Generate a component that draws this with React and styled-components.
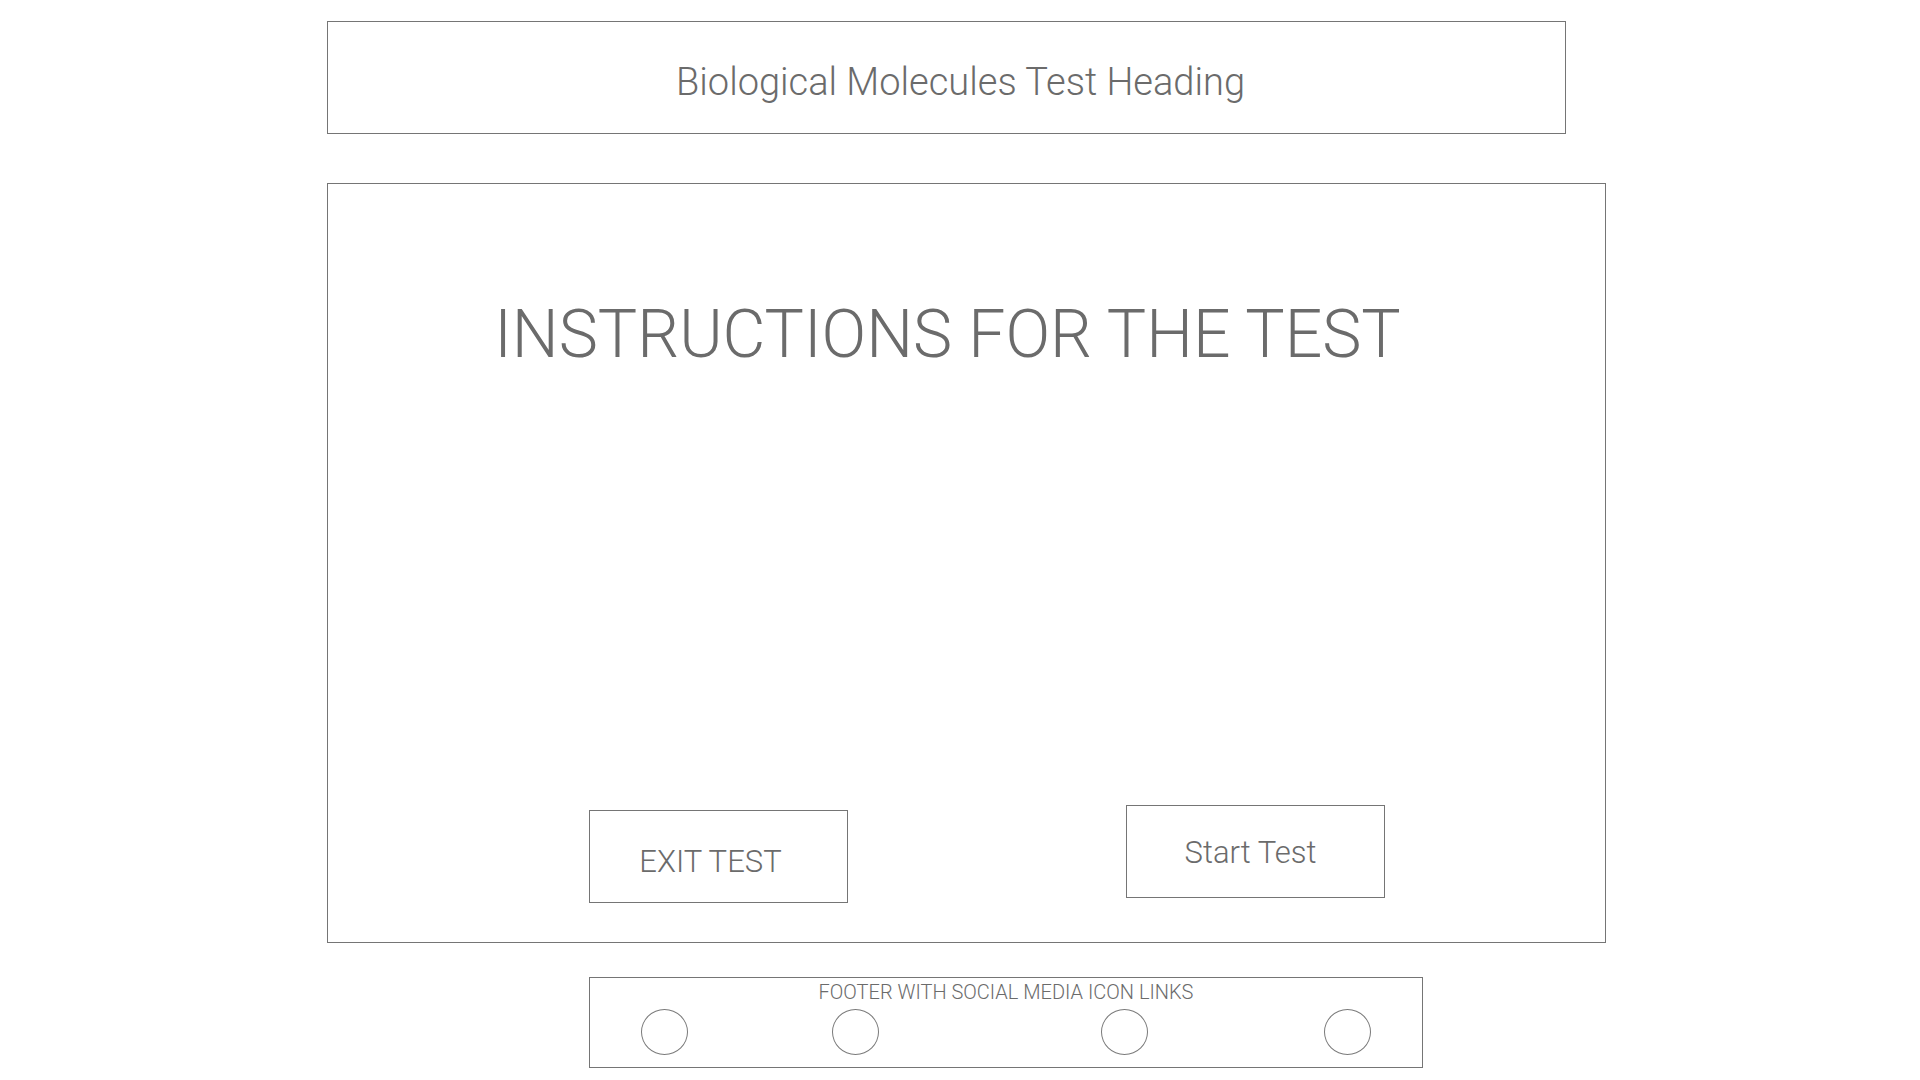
import React from "react";
import styled, { createGlobalStyle } from "styled-components";

const Global = createGlobalStyle`
  html, body { margin: 0; padding: 0; background: #ffffff; }
  body { font-family: Roboto, "Open Sans", sans-serif; color: #6b6b6b; }
  * { box-sizing: border-box; }
`;

const Page = styled.div`
  width: 1920px;
  height: 1080px;
  display: flex;
  flex-direction: column;
  align-items: flex-start;
  padding-top: 21px;
  padding-left: 327px;
`;

const Frame = styled.div`
  border: 1.5px solid #757575;
  background: #fff;
`;

const Header = styled(Frame)`
  width: 1239px;
  height: 113px;
  display: flex;
  align-items: center;
  justify-content: center;
  padding-left: 28px;
  padding-top: 8px;
`;

const HeaderTitle = styled.h1`
  margin: 0;
  font-weight: 300;
  font-size: 38px;
  line-height: 1;
  color: #6b6b6b;
`;

const Main = styled(Frame)`
  margin-top: 49px;
  width: 1279px;
  height: 760px;
  display: flex;
  flex-direction: column;
`;

const InstructionsTitle = styled.h2`
  margin: 111px 0 0;
  padding-right: 38px;
  text-align: center;
  font-weight: 300;
  font-size: 66px;
  line-height: 1.2;
  color: #6b6b6b;
`;

const ButtonRow = styled.div`
  margin-top: auto;
  margin-bottom: 39px;
  display: flex;
  align-items: flex-start;
  padding-left: 261px;
  gap: 278px;
`;

const OutlineButton = styled.button`
  width: 259px;
  height: 93px;
  margin-top: ${(p) => p.$drop || 0}px;
  border: 1.5px solid #757575;
  background: #fff;
  font-family: Roboto, "Open Sans", sans-serif;
  font-weight: 300;
  font-size: 31px;
  color: #6b6b6b;
  display: flex;
  align-items: center;
  justify-content: center;
  padding: ${(p) => p.$pad || "0"};
  cursor: pointer;
`;

const Footer = styled(Frame)`
  margin-top: 34px;
  margin-left: 262px;
  width: 834px;
  height: 91px;
  display: flex;
  flex-direction: column;
`;

const FooterText = styled.div`
  text-align: center;
  font-weight: 300;
  font-size: 20px;
  line-height: 22px;
  margin-top: 3px;
  color: #6b6b6b;
`;

const IconRow = styled.div`
  display: flex;
  margin-top: 6px;
`;

const IconLink = styled.a`
  display: block;
  width: 47px;
  height: 46px;
  border-radius: 50%;
  border: 1px solid #7a7a7a;
  margin-left: ${(p) => p.$offset}px;
`;

export default function App() {
  const icons = [51, 144, 222, 176];
  return (
    <>
      <Global />
      <Page>
        <Header>
          <HeaderTitle>Biological Molecules Test Heading</HeaderTitle>
        </Header>
        <Main>
          <InstructionsTitle>INSTRUCTIONS FOR THE TEST</InstructionsTitle>
          <ButtonRow>
            <OutlineButton $drop={5} $pad="9px 16px 0 0">EXIT TEST</OutlineButton>
            <OutlineButton $pad="1px 10px 0 0">Start Test</OutlineButton>
          </ButtonRow>
        </Main>
        <Footer>
          <FooterText>FOOTER WITH SOCIAL MEDIA ICON LINKS</FooterText>
          <IconRow>
            {icons.map((o, i) => (
              <IconLink key={i} href="#" $offset={o} aria-label={`social link ${i + 1}`} />
            ))}
          </IconRow>
        </Footer>
      </Page>
    </>
  );
}
